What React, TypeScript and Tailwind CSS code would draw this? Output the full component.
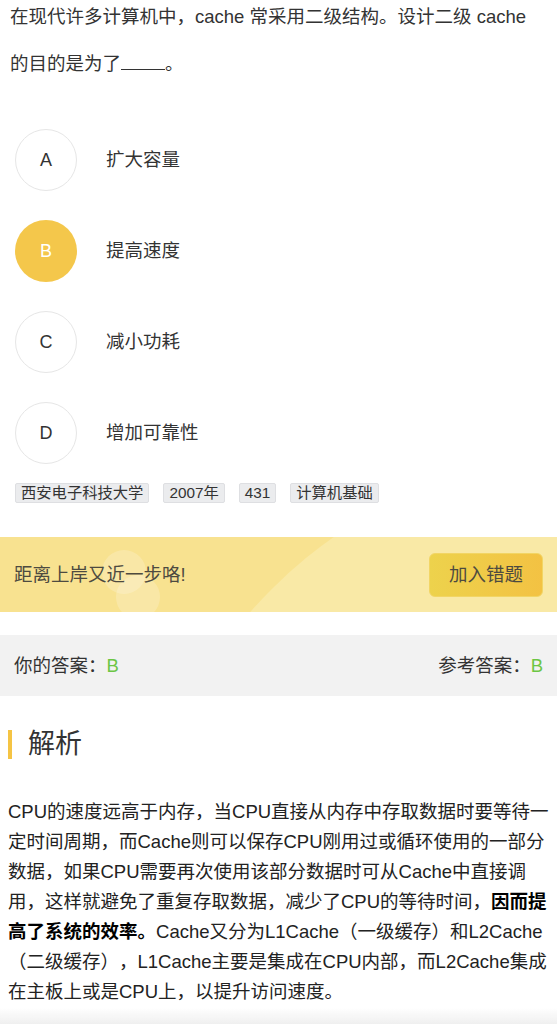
import React from "react";

const options = [
  { key: "A", label: "扩大容量" },
  { key: "B", label: "提高速度" },
  { key: "C", label: "减小功耗" },
  { key: "D", label: "增加可靠性" },
];

const tags = ["西安电子科技大学", "2007年", "431", "计算机基础"];

const selected = "B";

export default function App() {
  return (
    <div className="relative w-[557px] min-h-[1024px] overflow-hidden bg-white font-['Liberation_Sans','Noto_Sans_CJK_SC',sans-serif] text-[#333] [text-autospace:no-autospace]">
      <p className="-mt-[7px] pl-[10px] pr-[25px] text-[18.5px] leading-[47px]">
        在现代许多计算机中，cache 常采用二级结构。设计二级 cache
        的目的是为了
        <span className="inline-block h-[14px] w-[44px] border-b-[1.5px] border-[#333] align-baseline" />
        。
      </p>

      <div className="mt-[42px] flex flex-col gap-[29px] pl-[15px]">
        {options.map((o) => (
          <div key={o.key} className="flex items-center">
            <div
              className={`flex h-[62px] w-[62px] items-center justify-center rounded-full text-[18px] ${
                o.key === selected
                  ? "bg-[#f4c74b] text-white"
                  : "border border-[#e6e6e6] text-[#333]"
              }`}
            >
              {o.key}
            </div>
            <span className="ml-[29px] text-[18.5px]">{o.label}</span>
          </div>
        ))}
      </div>

      <div className="mt-[19px] flex gap-[14px] pl-[15px]">
        {tags.map((t) => (
          <span
            key={t}
            className="flex h-[20px] items-center rounded-[2px] border border-[#dedfe2] bg-[#ebecee] px-[5px] text-[15.3px] leading-[18px] text-[#333]"
          >
            {t}
          </span>
        ))}
      </div>

      <div className="relative mt-[34px] flex h-[75px] items-center justify-between overflow-hidden bg-[#f8e290] px-[14px]">
        <div className="absolute left-[136px] top-[-84px] h-[928px] w-[928px] rounded-full bg-[#f9e9a6]" />
        <div className="absolute left-[102px] top-[13px] h-[44px] w-[44px] rounded-full bg-white/20" />
        <div className="absolute left-[116px] top-[38px] h-[44px] w-[44px] rounded-full bg-white/20" />
        <span className="relative text-[18.5px] text-[#4d4a40]">
          距离上岸又近一步咯!
        </span>
        <button className="relative h-[44px] w-[114px] rounded-[6px] border border-[#f2d564] bg-linear-to-r from-[#edd24c] to-[#f3c243] text-[18.5px] text-[#4d4a40]">
          加入错题
        </button>
      </div>

      <div className="mt-[23px] flex h-[61px] items-center justify-between bg-[#f2f2f2] px-[14px] text-[18.5px]">
        <span>
          你的答案：<span className="text-[#6cc644]">B</span>
        </span>
        <span>
          参考答案：<span className="text-[#6cc644]">B</span>
        </span>
      </div>

      <div className="mt-[34px] flex h-[29px] items-center">
        <div className="ml-[8px] h-full w-[4px] bg-[#f5c444]" />
        <h2 className="ml-[16px] text-[27px] leading-[29px]">解析</h2>
      </div>

      <p className="mt-[38px] pl-[8px] pr-[4px] text-[18.5px] leading-[30px] text-[#222] [text-spacing-trim:space-all]">
        CPU的速度远高于内存，当CPU直接从内存中存取数据时要等待一定时间周期，而Cache则可以保存CPU刚用过或循环使用的一部分数据，如果CPU需要再次使用该部分数据时可从Cache中直接调用，这样就避免了重复存取数据，减少了CPU的等待时间，
        <b className="font-bold text-black">因而提高了系统的效率。</b>
        Cache又分为L1Cache（一级缓存）和L2Cache（二级缓存），L1Cache主要是集成在CPU内部，而L2Cache集成在主板上或是CPU上，以提升访问速度。
      </p>

      <div className="fixed bottom-0 left-0 h-[16px] w-[557px] bg-linear-to-b from-white/0 to-[#efefef]" />
    </div>
  );
}
